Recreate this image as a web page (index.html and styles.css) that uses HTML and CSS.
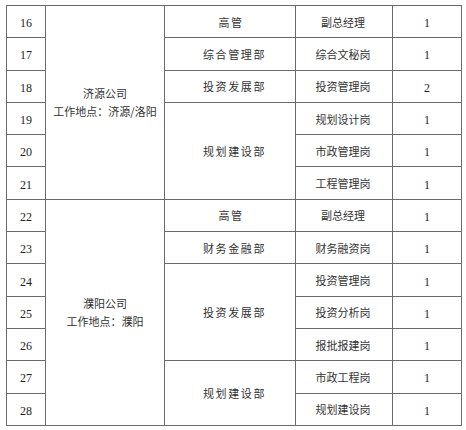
FILE: index.html
```html
<!DOCTYPE html>
<html lang="zh-CN">
<head>
<meta charset="utf-8">
<title>岗位表</title>
<link rel="stylesheet" href="styles.css">
</head>
<body>
<div class="wrap">
<table class="posts">
  <colgroup>
    <col class="c-num"><col class="c-co"><col class="c-dept"><col class="c-post"><col class="c-cnt">
  </colgroup>
  <tbody>
    <tr><td class="num">16</td><td class="co" rowspan="6">济源公司<br>工作地点：济源/洛阳</td><td class="dept short">高管</td><td class="post">副总经理</td><td class="cnt">1</td></tr>
    <tr><td class="num">17</td><td class="dept">综合管理部</td><td class="post">综合文秘岗</td><td class="cnt">1</td></tr>
    <tr><td class="num">18</td><td class="dept">投资发展部</td><td class="post">投资管理岗</td><td class="cnt">2</td></tr>
    <tr><td class="num">19</td><td class="dept" rowspan="3">规划建设部</td><td class="post">规划设计岗</td><td class="cnt">1</td></tr>
    <tr><td class="num">20</td><td class="post">市政管理岗</td><td class="cnt">1</td></tr>
    <tr><td class="num">21</td><td class="post">工程管理岗</td><td class="cnt">1</td></tr>
    <tr><td class="num">22</td><td class="co" rowspan="7">濮阳公司<br>工作地点：濮阳</td><td class="dept short">高管</td><td class="post">副总经理</td><td class="cnt">1</td></tr>
    <tr><td class="num">23</td><td class="dept">财务金融部</td><td class="post">财务融资岗</td><td class="cnt">1</td></tr>
    <tr><td class="num">24</td><td class="dept" rowspan="3">投资发展部</td><td class="post">投资管理岗</td><td class="cnt">1</td></tr>
    <tr><td class="num">25</td><td class="post">投资分析岗</td><td class="cnt">1</td></tr>
    <tr><td class="num">26</td><td class="post">报批报建岗</td><td class="cnt">1</td></tr>
    <tr><td class="num">27</td><td class="dept" rowspan="2">规划建设部</td><td class="post">市政工程岗</td><td class="cnt">1</td></tr>
    <tr><td class="num">28</td><td class="post">规划建设岗</td><td class="cnt">1</td></tr>
  </tbody>
</table>
</div>
</body>
</html>
```
FILE: styles.css
```css
html, body {
  margin: 0;
  padding: 0;
  background: #ffffff;
}
.wrap {
  padding: 5px 0 0 6px;
}
.posts {
  border-collapse: collapse;
  table-layout: fixed;
  width: 455px;
  font-family: "Noto Sans CJK SC", "Noto Sans", sans-serif;
  font-size: 11px;
  color: #333333;
}
.c-num { width: 39px; }
.c-co { width: 119px; }
.c-dept { width: 131px; }
.c-post { width: 97px; }
.c-cnt { width: 69px; }
.posts tr {
  height: 32.3px;
}
.posts td {
  border: 1px solid #6a6a6a;
  padding: 0;
  text-align: center;
  vertical-align: middle;
  line-height: 18px;
}
.posts td.num,
.posts td.cnt {
  font-family: "Liberation Serif", "Times New Roman", serif;
  font-size: 12px;
  color: #1e1e1e;
  padding-top: 3px;
}
.posts td.dept {
  letter-spacing: 1.6px;
  padding-left: 9px;
}
.posts td.dept.short {
  padding-left: 2px;
}
.posts td.post {
  padding-right: 2px;
}
```
